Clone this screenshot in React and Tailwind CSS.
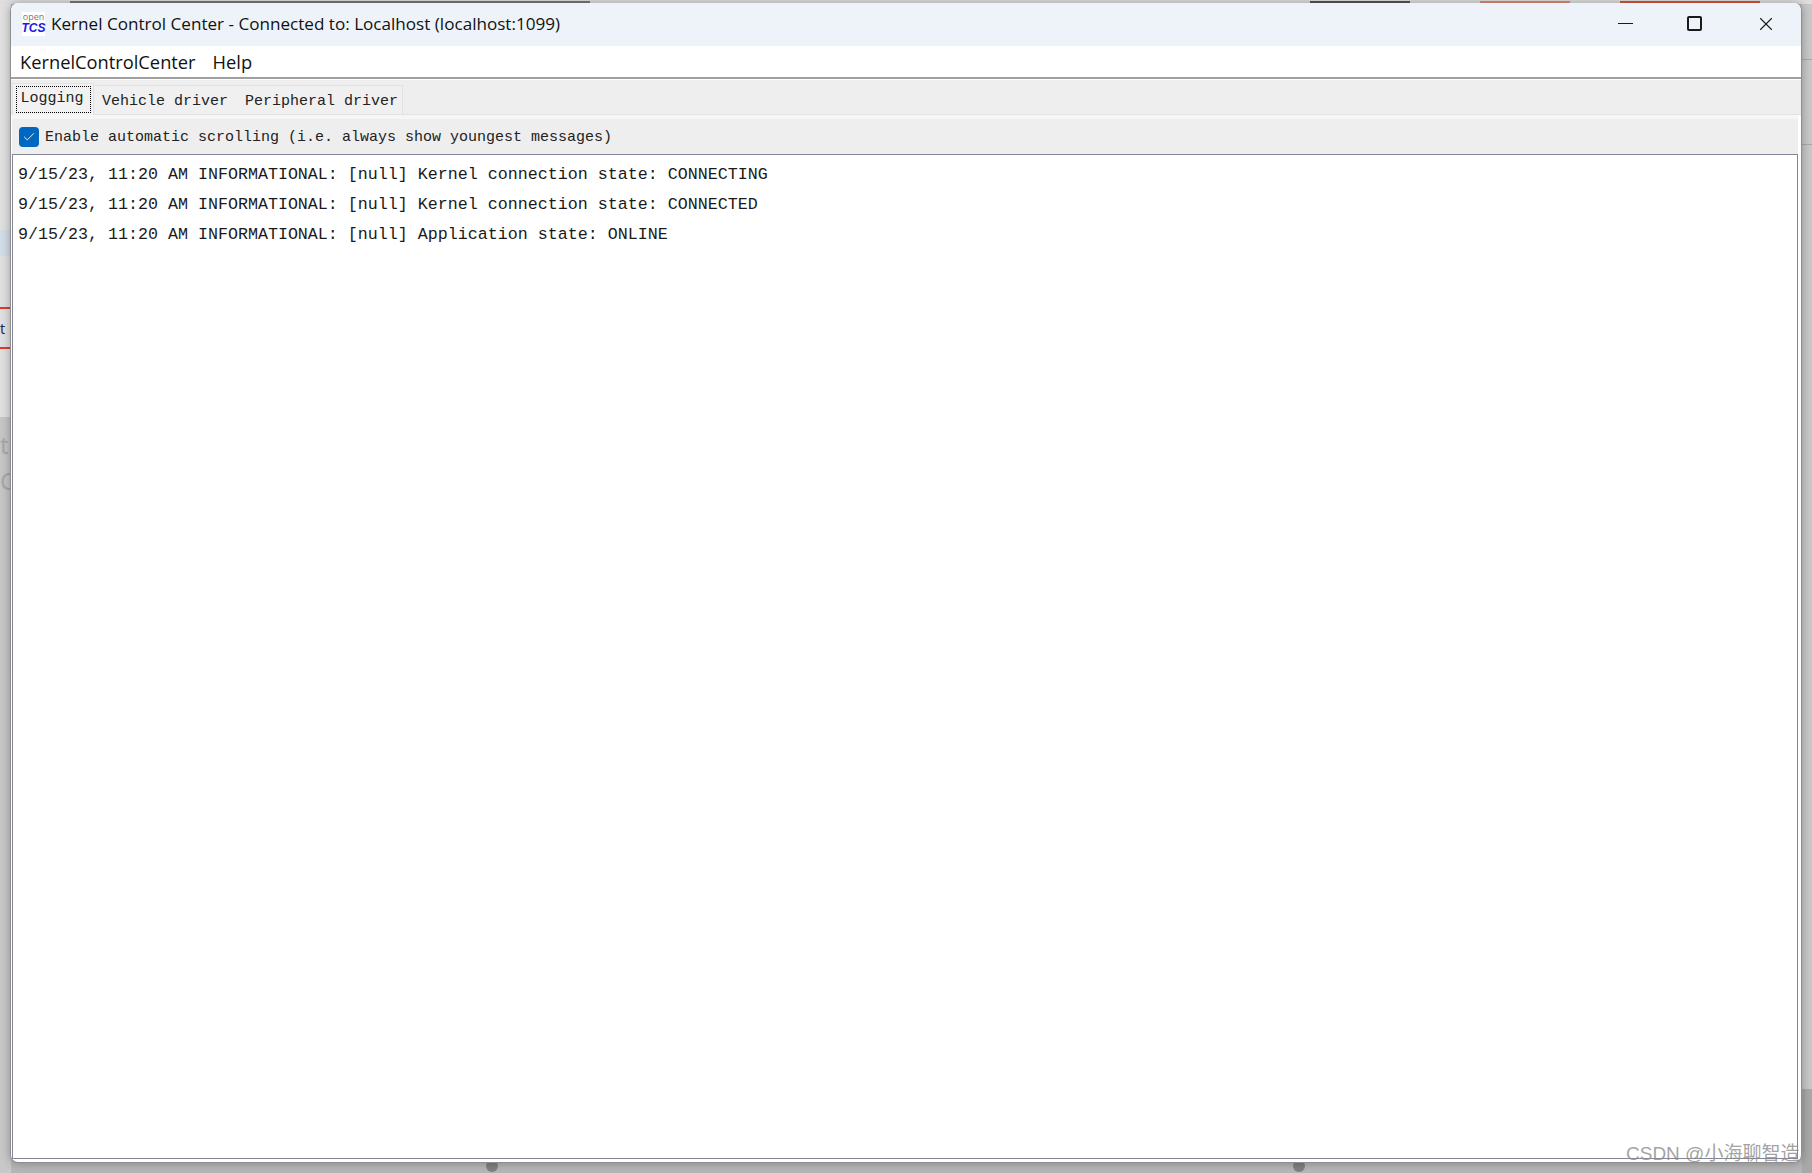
import { Check, X } from "lucide-react"

const logLines = [
  "9/15/23, 11:20 AM INFORMATIONAL: [null] Kernel connection state: CONNECTING",
  "9/15/23, 11:20 AM INFORMATIONAL: [null] Kernel connection state: CONNECTED",
  "9/15/23, 11:20 AM INFORMATIONAL: [null] Application state: ONLINE",
]

const mono = "font-['Liberation_Mono',monospace]"
const ui = "font-['Open_Sans',sans-serif]"

function Backdrop() {
  return (
    <div className="absolute inset-0 bg-[#b6b6b6]">
      {/* page behind the window, only the edges show */}
      <div className="flex h-[4px] items-end overflow-hidden bg-[#dedede]">
        <div className="ml-[70px] h-[3px] w-[520px] bg-[#777777]" />
        <div className="ml-[720px] h-[3px] w-[100px] bg-[#555555]" />
        <div className="ml-[70px] h-[3px] w-[90px] bg-[#e08a72]" />
        <div className="ml-[50px] h-[3px] w-[140px] bg-[#d9553a]" />
      </div>
      <div className="flex h-[1169px] justify-between">
        <div className="flex w-[11px] flex-col bg-[#e0e0e0] text-[#9a9a9a]">
          <div className="h-[226px]" />
          <div className="h-[26px] bg-[#d2dde8]" />
          <div className="h-[51px]" />
          <div className="flex h-[42px] items-center overflow-hidden border-y-2 border-[#e23b2a] text-[14px] text-[#1c2a50]">t</div>
          <div className="h-[68px]" />
          <div className="flex h-[90px] flex-col overflow-hidden bg-[#c6c6c6] pt-[10px] text-[24px] leading-[36px] text-[#a8a8a8]">
            <span>t</span>
            <span>C</span>
          </div>
          <div className="flex-1 bg-gradient-to-b from-[#c6c6c6] to-[#c8c8c8]" />
        </div>
        <div className="flex w-[10px] flex-col bg-[#c8c8c8]">
          <div className="h-[56px] border-b border-[#a8a8a8]" />
          <div className="h-[85px] border-b border-[#a8a8a8]" />
          <div className="flex-1" />
          <div className="h-[84px] bg-[#a8a8a8]" />
        </div>
      </div>
      <span className="absolute left-[486px] top-[1160px] h-[12px] w-[12px] rounded-full bg-[#808080]" />
      <span className="absolute left-[1293px] top-[1160px] h-[12px] w-[12px] rounded-full bg-[#808080]" />
    </div>
  )
}

function Logo() {
  return (
    <div className="flex h-[24px] w-[23px] flex-col items-center bg-white">
      <span className={`${ui} text-[9px] leading-[10px] text-[#777777]`}>open</span>
      <span className="font-['Liberation_Sans',sans-serif] text-[12px] font-bold italic leading-[12px] text-[#1a1ae0]">TCS</span>
    </div>
  )
}

function TitleBar() {
  return (
    <div className="flex h-[43px] shrink-0 items-center bg-[#eef3f9] pb-[2px] pl-[11px]">
      <Logo />
      <span className={`${ui} ml-[6px] text-[17.1px] leading-none text-[#111111]`}>
        Kernel Control Center - Connected to: Localhost (localhost:1099)
      </span>
      <div className="ml-auto flex items-center text-[#1a1a1a]">
        <span className="h-px w-[15px] bg-[#1a1a1a]" />
        <span className="ml-[54px] h-[15px] w-[15px] rounded-[2px] border-2 border-[#1a1a1a]" />
        <X size={22} strokeWidth={1.2} className="ml-[53px] mr-[24px]" />
      </div>
    </div>
  )
}

function MenuBar() {
  return (
    <div className={`${ui} flex h-[33px] shrink-0 items-center gap-[17px] border-b-2 border-[#a0a0a0] bg-white pl-[9px] text-[18.3px] text-[#111111]`}>
      <span>KernelControlCenter</span>
      <span>Help</span>
    </div>
  )
}

function TabStrip() {
  return (
    <div className={`${mono} flex h-[35px] shrink-0 items-end border-t border-white bg-[#eeeeee] pl-[1px] text-[15px] text-[#222222]`}>
      <div className="z-10 -mb-px flex h-[32px] w-[82px] items-center justify-center border-x border-t border-[#e2e2e2] bg-[#f2f2f2]">
        <span className="flex h-[27px] w-[75px] items-center justify-center border border-dotted border-black pb-[1px] pr-[2px]">Logging</span>
      </div>
      <div className="flex h-[29px] w-[309px] items-center gap-[17px] border-r border-t border-[#e2e2e2] bg-[#f0f0f0] pl-[8px] pt-[5px]">
        <span>Vehicle driver</span>
        <span>Peripheral driver</span>
      </div>
    </div>
  )
}

function ScrollOption() {
  return (
    <div className={`${mono} flex h-[35px] shrink-0 items-center bg-[#eeeeee] pl-[7px] text-[15px] text-[#222222]`}>
      <span className="flex h-[20px] w-[20px] items-center justify-center rounded-[4px] bg-[#0067c0]">
        <Check size={14} strokeWidth={1.5} className="text-white" />
      </span>
      <span className="ml-[6px] translate-y-[2px]">Enable automatic scrolling (i.e. always show youngest messages)</span>
    </div>
  )
}

function LogPanel() {
  return (
    <div className={`${mono} min-h-0 flex-1 border border-[#85859a] bg-white pl-[5px] pt-[5px] text-[16.67px] leading-[30px] text-[#1a1a1a]`}>
      {logLines.map((line) => (
        <div key={line} className="whitespace-pre">
          {line}
        </div>
      ))}
    </div>
  )
}

export default function App() {
  return (
    <div className="relative h-[1173px] w-[1812px] overflow-hidden">
      <Backdrop />

      <div className="absolute left-[10px] top-[3px] flex h-[1160px] w-[1792px] flex-col overflow-hidden rounded-lg border-x border-b border-[#8f8f8f] bg-white shadow-[0_0_10px_rgba(0,0,0,0.3)]">
        <TitleBar />
        <MenuBar />
        <TabStrip />
        <div className="flex min-h-0 flex-1 flex-col border-t border-[#e2e2e2] pb-[3px] pl-[1px] pr-[3px]">
          <div className="h-[4px] shrink-0 bg-[#f6f6f6]" />
          <ScrollOption />
          <LogPanel />
        </div>
      </div>

      <span className="absolute left-[1626px] top-[1142px] font-['Liberation_Sans','Noto_Sans_CJK_SC',sans-serif] text-[19px] leading-[24px] text-[#8a8a8a]/80">
        CSDN @小海聊智造
      </span>
    </div>
  )
}
